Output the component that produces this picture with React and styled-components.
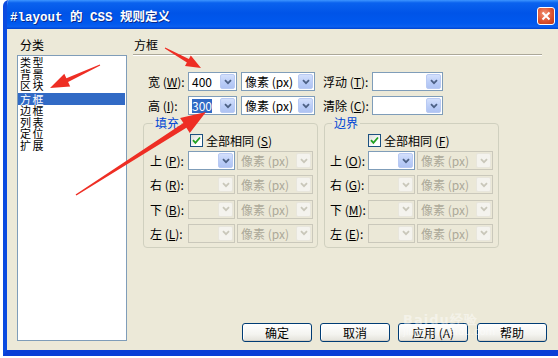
import React from 'react';
import styled, { createGlobalStyle } from 'styled-components';

const GlobalStyle = createGlobalStyle`
  html, body {
    margin: 0;
    padding: 0;
    background: #fff;
  }
  body {
    width: 558px;
    height: 358px;
    overflow: hidden;
    font-family: "Noto Sans CJK SC", "DejaVu Sans", sans-serif;
  }
`;

const cjk = `"Noto Sans CJK SC", "DejaVu Sans", sans-serif`;

const Frame = styled.div`
  position: relative;
  width: 558px;
  height: 358px;
  overflow: hidden;
  background: #fff;
`;

const Window = styled.div`
  margin-left: 3px;
  width: 560px;
  height: 356px;
  box-sizing: border-box;
  display: flex;
  flex-direction: column;
  border-left: 4px solid #0B4BE0;
  border-bottom: 6px solid #0A3ED6;
  border-top-left-radius: 6px;
  overflow: hidden;
`;

const TitleBar = styled.div`
  height: 29px;
  flex: none;
  display: flex;
  align-items: center;
  padding: 0 8px 0 3px;
  background: linear-gradient(
    to bottom,
    #3D95FF 0%,
    #0A62EE 10%,
    #0054E8 45%,
    #0058EE 80%,
    #0A5FF0 92%,
    #0042D0 100%
  );
`;

const TitleText = styled.span`
  flex: 1;
  font-family: "Liberation Mono", ${cjk};
  font-weight: bold;
  font-size: 12.5px;
  color: #fff;
  text-shadow: 1px 1px 0 #0A2A8A;
  margin-top: 1px;
`;

const CloseBtn = styled.div`
  width: 18px;
  height: 18px;
  margin-top: 2px;
  box-sizing: border-box;
  border: 1px solid #fff;
  border-radius: 3px;
  background: radial-gradient(circle at 40% 35%, #F29476 0%, #DD5230 55%, #BE3614 100%);
  display: flex;
  align-items: center;
  justify-content: center;
`;

const Body = styled.div`
  flex: 1;
  display: flex;
  background: #ECE9D8;
  padding: 8px 0 8px 10px;
  font-size: 12px;
  color: #000;
`;

const LeftCol = styled.div`
  width: 110px;
  display: flex;
  flex-direction: column;
`;

const SectionLabel = styled.div`
  height: ${p => p.$h || 18}px;
  line-height: 16px;
  padding-left: ${p => p.$indent || 0}px;
  font-size: 12px;
`;

const ListBox = styled.div`
  height: 286px;
  box-sizing: border-box;
  border: 1px solid #7F9DB9;
  background: #fff;
  padding-top: 1px;
`;

const ListItem = styled.div`
  height: 11.5px;
  line-height: 11.5px;
  font-size: 11px;
  padding-left: 2px;
  letter-spacing: 1.5px;
  background: ${p => (p.$active ? '#316AC5' : 'transparent')};
  color: ${p => (p.$active ? '#fff' : '#000')};
  margin-right: 1px;
  ${p => p.$active && 'margin-top: 1.5px; height: 12px; line-height: 12px;'}
`;

const RightCol = styled.div`
  margin-left: 6px;
  width: 418px;
  display: flex;
  flex-direction: column;
`;

const Rule = styled.div`
  width: 409px;
  border-top: 1px solid #ACA899;
  border-bottom: 1px solid #fff;
`;

const FormBlock = styled.div`
  margin-top: 16px;
  padding-left: 15px;
  display: flex;
  flex-direction: column;
  gap: 5px;
`;

const Row = styled.div`
  display: flex;
  align-items: center;
  height: 19px;
`;

const FieldLabel = styled.span`
  width: ${p => p.$w}px;
  flex: none;
  font-size: 12px;
  white-space: nowrap;
  margin-left: ${p => p.$ml || 0}px;
  u {
    text-decoration: underline;
  }
`;

const SelectBox = styled.div`
  width: ${p => p.$w}px;
  height: ${p => p.$h || 19}px;
  flex: none;
  margin-left: ${p => p.$ml || 0}px;
  box-sizing: border-box;
  border: 1px solid ${p => (p.$disabled ? '#CAC8BB' : '#7F9DB9')};
  background: ${p => (p.$disabled ? '#EBE8D7' : '#fff')};
  display: flex;
  align-items: stretch;
  padding: 1px;
`;

const SelectValue = styled.span`
  flex: 1;
  display: flex;
  align-items: center;
  padding-left: 2px;
  font-size: 12px;
  white-space: nowrap;
  overflow: hidden;
  color: ${p => (p.$disabled ? '#ACA899' : '#000')};
`;

const Highlight = styled.span`
  background: #316AC5;
  color: #fff;
  line-height: 14px;
`;

const DropBtn = styled.span`
  width: 15px;
  flex: none;
  box-sizing: border-box;
  border-radius: 2px;
  display: flex;
  align-items: center;
  justify-content: center;
  border: 1px solid ${p => (p.$disabled ? '#E8E6DC' : '#B9CAF3')};
  background: ${p =>
    p.$disabled
      ? '#F4F3EE'
      : 'linear-gradient(to bottom, #D4E0FC 0%, #B9CCF7 60%, #AFC3F2 100%)'};
`;

const Groups = styled.div`
  margin-top: 1px;
  padding-left: 10px;
  display: flex;
  gap: 6px;
`;

const Group = styled.fieldset`
  margin: 0;
  padding: 0 0 0 ${p => p.$pad}px;
  width: 175px;
  height: 132px;
  box-sizing: border-box;
  border: 1px solid #D0D0BF;
  border-radius: 4px;
  display: flex;
  flex-direction: column;
  min-width: 0;
`;

const Legend = styled.legend`
  margin-left: ${p => p.$ml}px;
  padding: 0 2px;
  font-size: 12px;
  line-height: 14px;
  color: #0046D5;
`;

const CheckRow = styled.label`
  display: flex;
  align-items: center;
  gap: 3px;
  height: 14px;
  margin-top: 3px;
  padding-left: ${p => p.$indent}px;
  font-size: 12px;
  white-space: nowrap;
`;

const CheckBox = styled.span`
  width: 13px;
  height: 13px;
  flex: none;
  box-sizing: border-box;
  border: 1px solid #1C5180;
  background: linear-gradient(135deg, #DCDCD7 0%, #fff 70%);
  display: flex;
  align-items: center;
  justify-content: center;
`;

const GroupRows = styled.div`
  margin-top: 4px;
  display: flex;
  flex-direction: column;
  gap: 5.3px;
`;

const ButtonRow = styled.div`
  margin-top: auto;
  padding-left: 109px;
  display: flex;
  gap: 8px;
`;

const Button = styled.button`
  width: 70px;
  height: 19px;
  padding: 0;
  box-sizing: border-box;
  border: 1px solid #003C74;
  border-radius: 3px;
  background: linear-gradient(to bottom, #FFFFFF 0%, #F4F4F0 60%, #E3E2DA 100%);
  box-shadow: inset 0 -1px 0 #D6D0C5, inset 1px 0 0 #fff;
  font-family: ${cjk};
  font-size: 12px;
  line-height: 16px;
  color: #000;
  margin-left: ${p => p.$ml || 0}px;
`;

const Overlay = styled.svg`
  position: absolute;
  left: 0;
  top: 0;
  pointer-events: none;
`;

const Watermark = styled.div`
  position: absolute;
  left: 403px;
  top: 314px;
  font-family: "DejaVu Sans", sans-serif;
  font-size: 10px;
  line-height: 11px;
  color: rgba(255, 255, 255, 0.45);
  pointer-events: none;
  span {
    display: block;
  }
  span:first-child {
    font-weight: bold;
    font-size: 13px;
    line-height: 12px;
    letter-spacing: 1px;
  }
`;

function Chevron({ disabled }) {
  return (
    <svg width="8" height="6" viewBox="0 0 8 6">
      <path
        d="M1 1.2 L4 4.2 L7 1.2"
        fill="none"
        stroke={disabled ? '#C9C7BA' : '#4D6185'}
        strokeWidth="1.8"
      />
    </svg>
  );
}

function Select({ w, value, disabled, selected, ml, h }) {
  return (
    <SelectBox $w={w} $disabled={disabled} $ml={ml} $h={h}>
      <SelectValue $disabled={disabled}>
        {selected ? <Highlight>{value}</Highlight> : value}
      </SelectValue>
      <DropBtn $disabled={disabled}>
        <Chevron disabled={disabled} />
      </DropBtn>
    </SelectBox>
  );
}

function arrowPoints(tail, tip, w1, w2, hw, hl) {
  const dx = tip[0] - tail[0];
  const dy = tip[1] - tail[1];
  const len = Math.hypot(dx, dy);
  const d = [dx / len, dy / len];
  const n = [-d[1], d[0]];
  const base = [tip[0] - d[0] * hl, tip[1] - d[1] * hl];
  const p = (o, k) => `${(o[0] + n[0] * k).toFixed(1)},${(o[1] + n[1] * k).toFixed(1)}`;
  return [
    p(tail, w1 / 2),
    p(base, w2 / 2),
    p(base, hw / 2),
    `${tip[0]},${tip[1]}`,
    p(base, -hw / 2),
    p(base, -w2 / 2),
    p(tail, -w1 / 2),
  ].join(' ');
}

// red annotation arrows drawn over the dialog
const arrows = [
  { tail: [100, 65], tip: [50, 88], w1: 1, w2: 4, hw: 14, hl: 19 },
  { tail: [165, 48], tip: [201, 68], w1: 1, w2: 4, hw: 12, hl: 15 },
  { tail: [76, 195], tip: [206, 112], w1: 1.5, w2: 5.5, hw: 18, hl: 25 },
];

const categories = ['类型', '背景', '区块', '方框', '边框', '列表', '定位', '扩展'];

const paddingRows = [
  { label: '上', key: 'P' },
  { label: '右', key: 'R' },
  { label: '下', key: 'B' },
  { label: '左', key: 'L' },
];

const marginRows = [
  { label: '上', key: 'O' },
  { label: '右', key: 'G' },
  { label: '下', key: 'M' },
  { label: '左', key: 'E' },
];

function SideGroup({ title, checkKey, rows, pad, legendMl, checkIndent }) {
  return (
    <Group $pad={pad}>
      <Legend $ml={legendMl}>{title}</Legend>
      <CheckRow $indent={checkIndent}>
        <CheckBox>
          <svg width="9" height="9" viewBox="0 0 9 9">
            <path d="M1 4.2 L3.4 6.8 L8 1.5" fill="none" stroke="#21A121" strokeWidth="1.8" />
          </svg>
        </CheckBox>
        <span>
          全部相同 (<u>{checkKey}</u>)
        </span>
      </CheckRow>
      <GroupRows>
        {rows.map((r, i) => (
          <Row key={r.key}>
            <FieldLabel $w={38}>
              {r.label} (<u>{r.key}</u>):
            </FieldLabel>
            <Select w={47} value="" disabled={i > 0} />
            <Select w={76} value="像素 (px)" disabled ml={2} />
          </Row>
        ))}
      </GroupRows>
    </Group>
  );
}

export default function App() {
  return (
    <Frame>
      <GlobalStyle />
      <Window>
        <TitleBar>
          <TitleText>#layout 的 CSS 规则定义</TitleText>
          <CloseBtn>
            <svg width="10" height="10" viewBox="0 0 10 10">
              <path d="M1.5 1.5 L8.5 8.5 M8.5 1.5 L1.5 8.5" stroke="#fff" strokeWidth="2" />
            </svg>
          </CloseBtn>
        </TitleBar>
        <Body>
          <LeftCol>
            <SectionLabel $indent={3}>分类</SectionLabel>
            <ListBox>
              {categories.map(c => (
                <ListItem key={c} $active={c === '方框'}>
                  {c}
                </ListItem>
              ))}
            </ListBox>
          </LeftCol>
          <RightCol>
            <SectionLabel $indent={1} $h={17}>方框</SectionLabel>
            <Rule />
            <FormBlock>
              <Row>
                <FieldLabel $w={40}>
                  宽 (<u>W</u>):
                </FieldLabel>
                <Select w={49} value="400" />
                <Select w={74} value="像素 (px)" ml={4} />
                <FieldLabel $w={49} $ml={8}>
                  浮动 (<u>T</u>):
                </FieldLabel>
                <Select w={71} value="" />
              </Row>
              <Row>
                <FieldLabel $w={40}>
                  高 (<u>I</u>):
                </FieldLabel>
                <Select w={49} value="300" selected />
                <Select w={74} value="像素 (px)" ml={4} />
                <FieldLabel $w={49} $ml={8}>
                  清除 (<u>C</u>):
                </FieldLabel>
                <Select w={71} value="" />
              </Row>
            </FormBlock>
            <Groups>
              <SideGroup title="填充" checkKey="S" rows={paddingRows} pad={6} legendMl={3} checkIndent={40} />
              <SideGroup title="边界" checkKey="F" rows={marginRows} pad={5} legendMl={2} checkIndent={38} />
            </Groups>
            <ButtonRow>
              <Button>确定</Button>
              <Button>取消</Button>
              <Button>应用 (A)</Button>
              <Button $ml={1}>帮助</Button>
            </ButtonRow>
          </RightCol>
        </Body>
      </Window>
      <Watermark>
        <span>Baidu经验</span>
        <span>jingyan.baidu.com</span>
      </Watermark>
      <Overlay width="558" height="358" viewBox="0 0 558 358">
        {arrows.map((a, i) => (
          <polygon
            key={i}
            points={arrowPoints(a.tail, a.tip, a.w1, a.w2, a.hw, a.hl)}
            fill="#EE2E24"
          />
        ))}
      </Overlay>
    </Frame>
  );
}
